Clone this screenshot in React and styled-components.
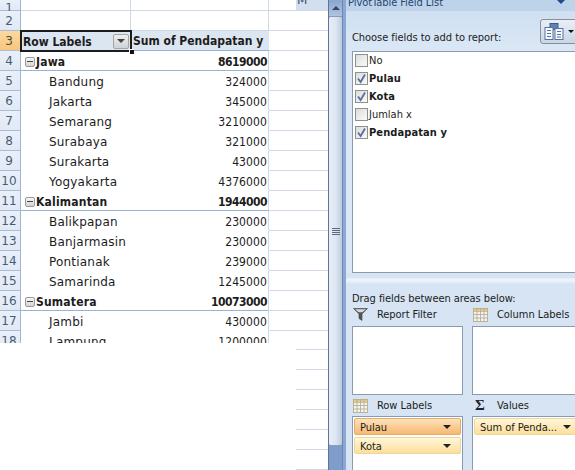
import React from "react";
import styled, { createGlobalStyle } from "styled-components";

const GlobalStyle = createGlobalStyle`
  html, body {
    margin: 0;
    padding: 0;
    background: #fff;
  }
  * {
    box-sizing: border-box;
  }
`;

const cellFont = `"DejaVu Sans", Verdana, sans-serif`;
const paneFont = `"DejaVu Sans Condensed", "DejaVu Sans", sans-serif`;

const Page = styled.div`
  display: flex;
  width: 575px;
  height: 470px;
  overflow: hidden;
  font-family: ${cellFont};
`;

/* worksheet */
const Sheet = styled.div`
  width: 328px;
  flex: none;
  display: flex;
  flex-direction: column;
  background: #fff;
`;

const Table = styled.div`
  height: 343px;
  flex: none;
  overflow: hidden;
`;

const Row = styled.div`
  display: grid;
  grid-template-columns: 21px 110px 138px 59px;
  height: ${(props) => (props.$clipped ? 11 : 20)}px;
  align-items: stretch;
  overflow: ${(props) => (props.$clipped ? "hidden" : "visible")};
`;

const RowHead = styled.div`
  display: flex;
  align-items: ${(props) => (props.$clipped ? "flex-end" : "center")};
  justify-content: center;
  padding: ${(props) => (props.$clipped ? "0 2px 0 0" : "2px 2px 0 0")};
  font-size: 12px;
  color: ${(props) => (props.$active ? "#4c4c3a" : "#4a5c74")};
  background: ${(props) =>
    props.$active
      ? "linear-gradient(#fbd9a2, #f8c67c)"
      : "linear-gradient(#eaf0f9, #e0e9f5)"};
  border-bottom: 1px solid #a9bdd6;
  border-right: 1px solid #9eb6ce;
  line-height: ${(props) => (props.$clipped ? "4px" : "17px")};
`;

const Cell = styled.div`
  display: flex;
  align-items: center;
  min-width: 0;
  padding-top: 2px;
  color: #1c1c1c;
  white-space: nowrap;
  font-family: ${(props) => (props.$bold ? paneFont : cellFont)};
  font-weight: ${(props) => (props.$bold ? 700 : 400)};
  font-size: 12px;
  border-bottom: 1px solid ${(props) => props.$line || "transparent"};
`;

const LabelCell = styled(Cell)`
  padding-left: ${(props) => props.$indent}px;
  letter-spacing: 0.2px;
`;

const ValueCell = styled(Cell)`
  justify-content: flex-end;
  padding-right: 1px;
  border-right: 1px solid #d0d7e5;
  font-family: ${paneFont};
  letter-spacing: ${(props) => (props.$bold ? "-0.5px" : "0.1px")};
`;

const BlankCell = styled.div`
  border-bottom: 1px solid #d0d7e5;
  border-right: ${(props) => (props.$divider ? "1px solid #d0d7e5" : "0")};
`;

const TailCell = styled(BlankCell)`
  display: flex;
  justify-content: flex-end;
`;

const ColumnStub = styled.div`
  width: 32px;
  height: 100%;
  padding-left: 1px;
  background: #d3dfee;
  font-size: 12px;
  line-height: 1px;
  color: #44546a;
  overflow: hidden;
`;

const ActiveCell = styled.div`
  position: relative;
  z-index: 2;
  display: flex;
  align-items: center;
  justify-content: space-between;
  padding: 1px 2px 0 2px;
  background: #dce6f1;
  font-family: ${paneFont};
  font-size: 12px;
  font-weight: 700;
  color: #1c1c1c;
  box-shadow: 0 0 0 1px #1c1c1c, inset 0 0 0 1px #1c1c1c;
`;

const FillHandle = styled.span`
  position: absolute;
  right: -3px;
  bottom: -3px;
  width: 5px;
  height: 5px;
  background: #111;
  border: 1px solid #fff;
  border-right: 0;
  border-bottom: 0;
`;

const FilterButton = styled.span`
  width: 16px;
  height: 15px;
  margin-top: -1px;
  display: flex;
  align-items: center;
  justify-content: center;
  border: 1px solid #a5a5a5;
  border-radius: 2px;
  background: linear-gradient(#eeeeee, #cfd2d6);
`;

const HeaderCell = styled.div`
  display: flex;
  align-items: center;
  padding: 1px 0 0 2px;
  font-family: ${paneFont};
  font-size: 12px;
  font-weight: 700;
  color: #1c1c1c;
  white-space: nowrap;
  background: #dce6f1;
  border-bottom: 1px solid #95b3d7;
`;

const DownArrow = styled.i`
  display: block;
  flex: none;
  width: 0;
  height: 0;
  border-left: ${(props) => props.$size}px solid transparent;
  border-right: ${(props) => props.$size}px solid transparent;
  border-top: ${(props) => props.$size}px solid ${(props) => props.$color};
`;

const Outline = styled.span`
  width: 10px;
  height: 10px;
  margin-right: 1px;
  flex: none;
  display: flex;
  align-items: center;
  justify-content: center;
  border: 1px solid #9a9a9a;
  border-radius: 2px;
  background: linear-gradient(#f7f7f7, #d4d4d4);

  &::after {
    content: "";
    width: 6px;
    height: 1px;
    background: #444;
  }
`;

const Below = styled.div`
  flex: 1;
  display: flex;
`;

const WhiteArea = styled.div`
  width: 296px;
  background: #fff;
`;

const LooseLines = styled.div`
  flex: 1;
  background: repeating-linear-gradient(
    #fff 0,
    #fff 6px,
    #d0d7e5 6px,
    #d0d7e5 7px,
    #fff 7px,
    #fff 20px
  );
`;

/* vertical scrollbar */
const ScrollBar = styled.div`
  width: 15px;
  flex: none;
  display: flex;
  flex-direction: column;
  background: #7e9dcb;
  border-left: 1px solid #5e7696;
  border-right: 1px solid #6f87ad;
`;

const ScrollUp = styled.div`
  height: 16px;
  flex: none;
  display: flex;
  align-items: center;
  justify-content: center;
  background: linear-gradient(#8aa6cf, #aec4e0);
`;

const UpArrow = styled.i`
  display: block;
  width: 0;
  height: 0;
  border-left: 4px solid transparent;
  border-right: 4px solid transparent;
  border-bottom: 4px solid #33455f;
`;

const ScrollThumb = styled.div`
  height: 430px;
  flex: none;
  display: flex;
  align-items: center;
  justify-content: center;
  background: linear-gradient(90deg, #e8eef7, #dbe5f2 55%, #bccbdd);
  border: 1px solid #8a9db8;
  border-left: 0;
  border-right: 0;
  border-radius: 2px;
`;

const Grip = styled.span`
  width: 8px;
  height: 7px;
  background: repeating-linear-gradient(#5c6b80 0, #5c6b80 1px, transparent 1px, transparent 2px);
`;

/* pivot table pane */
const Pane = styled.div`
  flex: 1;
  min-width: 0;
  display: flex;
  flex-direction: column;
  background: #d6e4f3;
  border-left: 3px solid #8ba7d3;
  font-family: ${paneFont};
  font-size: 11px;
  letter-spacing: -0.05px;
  color: #1c1c1c;
`;

const PaneTitle = styled.div`
  height: 11px;
  flex: none;
  display: flex;
  justify-content: space-between;
  padding: 0 9px 0 2px;
  background: #bdd3ea;
  color: #27456f;
  line-height: 6px;
  overflow: hidden;
`;

const TitleChevron = styled.i`
  display: block;
  width: 0;
  height: 0;
  margin-top: -1px;
  border-left: 5px solid transparent;
  border-right: 5px solid transparent;
  border-top: 5px solid #1f4a8c;
`;

const PaneBody = styled.div`
  padding-left: 6px;
  background: linear-gradient(#cfe0f2, #dbe7f5 40px);
`;

const ToolRow = styled.div`
  height: 40px;
  display: flex;
  align-items: flex-end;
  justify-content: space-between;
  padding-bottom: 7px;
  position: relative;
`;

const LayoutButton = styled.span`
  position: absolute;
  right: -9px;
  top: 8px;
  width: 44px;
  height: 25px;
  display: flex;
  align-items: center;
  gap: 4px;
  padding-left: 3px;
  border: 1px solid #8b8f96;
  border-radius: 3px;
  background: linear-gradient(#e9eff7, #c9d6e6);
`;

const FieldBox = styled.div`
  height: 222px;
  width: 240px;
  display: flex;
  flex-direction: column;
  padding: 0 0 0 2px;
  background: #fff;
  border: 1px solid #8a9bb0;
  border-right: 0;

  & > label:first-child {
    margin-top: -1px;
  }
`;

const FieldRow = styled.label`
  height: 18px;
  flex: none;
  display: flex;
  align-items: center;
  gap: 1px;
  font-weight: ${(props) => (props.$on ? 700 : 400)};
  letter-spacing: ${(props) => (props.$on ? "0.1px" : "0")};
`;

const Check = styled.span`
  width: 13px;
  height: 13px;
  flex: none;
  display: flex;
  align-items: center;
  justify-content: center;
  border: 1px solid #8e8f8f;
  background: linear-gradient(135deg, #dcdcdc, #fbfbfb);
`;

const Splitter = styled.div`
  height: 6px;
  margin-top: 5px;
  background: linear-gradient(#e4eef9, #eef4fb 40%, #d8e5f4);
`;

const DropZone = styled.div`
  flex: 1;
  padding: 7px 0 0 6px;
  overflow: hidden;
  background: #d6e4f3;
`;

const DragHint = styled.div`
  height: 15px;
  line-height: 15px;
`;

const AreaGrid = styled.div`
  display: grid;
  grid-template-columns: 111px 111px;
  grid-template-rows: 90px 1fr;
  column-gap: 9px;
`;

const Area = styled.div`
  display: flex;
  flex-direction: column;
`;

const AreaHead = styled.div`
  height: 20px;
  flex: none;
  display: flex;
  align-items: center;
  padding: 0 0 ${(props) => (props.$low ? 1 : 3)}px 1px;
  font-size: 11px;
`;

const AreaIcon = styled.span`
  width: 24px;
  flex: none;
  display: flex;
  align-items: center;
`;

const Sigma = styled.span`
  font-family: "Liberation Serif", serif;
  font-weight: 700;
  font-size: 15px;
  line-height: 15px;
  margin-left: 2px;
  color: #1d2430;
`;

const AreaBox = styled.div`
  height: ${(props) => (props.$open ? 90 : 69)}px;
  display: flex;
  flex-direction: column;
  gap: 2px;
  padding: 1px;
  background: #fff;
  border: 1px solid #8a9bb0;
`;

const Chip = styled.div`
  height: 17px;
  flex: none;
  display: flex;
  align-items: center;
  justify-content: space-between;
  padding: 1px 9px 0 5px;
  border: 1px solid ${(props) => (props.$hot ? "#e3ad6c" : "#ecd79f")};
  border-radius: 2px;
  background: ${(props) =>
    props.$hot
      ? "linear-gradient(#fde2bb, #f8b871)"
      : "linear-gradient(#fff6d9, #fddf9b)"};
  white-space: nowrap;
`;

const FunnelIcon = () => (
  <svg width="15" height="13" viewBox="0 0 15 13">
    <path d="M0.5 0.5H14.5L9 6V12.5L6 10.5V6Z" fill="#555" stroke="#444" strokeWidth="0.6" />
    <path d="M2 1.2H13L9.4 4.2H5.6Z" fill="#d9d9d9" />
  </svg>
);

const GridIcon = () => (
  <svg width="15" height="14" viewBox="0 0 15 14">
    <rect x="0.5" y="0.5" width="14" height="13" fill="#fbf3da" stroke="#b9b39a" />
    <rect x="0.5" y="0.5" width="14" height="3" fill="#e5c98e" stroke="#b9a06e" strokeWidth="0.5" />
    <path d="M4 0.5V13.5M7.5 0.5V13.5M11 0.5V13.5M0.5 6.5H14.5M0.5 10H14.5" stroke="#a4a7b4" strokeWidth="0.8" />
  </svg>
);

const LayoutIcon = () => (
  <svg width="20" height="18" viewBox="0 0 20 18">
    <rect x="6" y="0.5" width="8" height="6" fill="#5f83b6" stroke="#3d5f90" />
    <rect x="1" y="4.5" width="8" height="12" fill="#f6f8fb" stroke="#54739f" />
    <path d="M3 7.5H7M3 10.5H7M3 13.5H7" stroke="#54739f" />
    <rect x="11" y="5.5" width="8" height="11" fill="#f6f8fb" stroke="#54739f" />
    <path d="M13 8.5H17M13 11.5H17M13 14H17" stroke="#54739f" />
  </svg>
);

const CheckMark = () => (
  <svg width="11" height="11" viewBox="0 0 11 11">
    <path d="M2 5.5L4.6 9L9 1.5" fill="none" stroke="#5a6f9c" strokeWidth="1.8" />
  </svg>
);

const groups = [
  {
    name: "Jawa",
    total: "8619000",
    items: [
      ["Bandung", "324000"],
      ["Jakarta", "345000"],
      ["Semarang", "3210000"],
      ["Surabaya", "321000"],
      ["Surakarta", "43000"],
      ["Yogyakarta", "4376000"],
    ],
  },
  {
    name: "Kalimantan",
    total: "1944000",
    items: [
      ["Balikpapan", "230000"],
      ["Banjarmasin", "230000"],
      ["Pontianak", "239000"],
      ["Samarinda", "1245000"],
    ],
  },
  {
    name: "Sumatera",
    total: "10073000",
    items: [
      ["Jambi", "430000"],
      ["Lampung", "1200000"],
    ],
  },
];

const fields = [
  ["No", false],
  ["Pulau", true],
  ["Kota", true],
  ["Jumlah x", false],
  ["Pendapatan y", true],
];

const pivotRows = [];
groups.forEach((group) => {
  pivotRows.push({ label: group.name, value: group.total, bold: true });
  group.items.forEach(([label, value]) => pivotRows.push({ label, value }));
});

export default function App() {
  return (
    <Page>
      <GlobalStyle />
      <Sheet>
        <Table>
          <Row $clipped>
            <RowHead $clipped>1</RowHead>
            <BlankCell $divider />
            <BlankCell $divider />
            <TailCell>
              <ColumnStub>M</ColumnStub>
            </TailCell>
          </Row>
          <Row>
            <RowHead>2</RowHead>
            <BlankCell $divider />
            <BlankCell $divider />
            <BlankCell />
          </Row>
          <Row>
            <RowHead $active>3</RowHead>
            <ActiveCell>
              Row Labels
              <FilterButton>
                <DownArrow $size={4} $color="#444" />
              </FilterButton>
              <FillHandle />
            </ActiveCell>
            <HeaderCell>Sum of Pendapatan y</HeaderCell>
            <BlankCell />
          </Row>
          {pivotRows.map((row, i) => (
            <Row key={row.label}>
              <RowHead>{i + 4}</RowHead>
              <LabelCell
                $bold={row.bold}
                $indent={row.bold ? 4 : 28}
                $line={row.bold ? "#95b3d7" : undefined}
              >
                {row.bold && <Outline />}
                {row.label}
              </LabelCell>
              <ValueCell $bold={row.bold} $line={row.bold ? "#95b3d7" : undefined}>
                {row.value}
              </ValueCell>
              <BlankCell />
            </Row>
          ))}
        </Table>
        <Below>
          <WhiteArea />
          <LooseLines />
        </Below>
      </Sheet>

      <ScrollBar>
        <ScrollUp>
          <UpArrow />
        </ScrollUp>
        <ScrollThumb>
          <Grip />
        </ScrollThumb>
      </ScrollBar>

      <Pane>
        <PaneTitle>
          PivotTable Field List
          <TitleChevron />
        </PaneTitle>
        <PaneBody>
          <ToolRow>
            Choose fields to add to report:
            <LayoutButton>
              <LayoutIcon />
              <DownArrow $size={3} $color="#111" />
            </LayoutButton>
          </ToolRow>
          <FieldBox>
            {fields.map(([name, on]) => (
              <FieldRow key={name} $on={on}>
                <Check>{on && <CheckMark />}</Check>
                {name}
              </FieldRow>
            ))}
          </FieldBox>
        </PaneBody>
        <Splitter />
        <DropZone>
          <DragHint>Drag fields between areas below:</DragHint>
          <AreaGrid>
            <Area>
              <AreaHead>
                <AreaIcon>
                  <FunnelIcon />
                </AreaIcon>
                Report Filter
              </AreaHead>
              <AreaBox />
            </Area>
            <Area>
              <AreaHead>
                <AreaIcon>
                  <GridIcon />
                </AreaIcon>
                Column Labels
              </AreaHead>
              <AreaBox />
            </Area>
            <Area>
              <AreaHead $low>
                <AreaIcon>
                  <GridIcon />
                </AreaIcon>
                Row Labels
              </AreaHead>
              <AreaBox $open>
                <Chip $hot>
                  Pulau
                  <DownArrow $size={4} $color="#222" />
                </Chip>
                <Chip>
                  Kota
                  <DownArrow $size={4} $color="#222" />
                </Chip>
              </AreaBox>
            </Area>
            <Area>
              <AreaHead $low>
                <AreaIcon>
                  <Sigma>Σ</Sigma>
                </AreaIcon>
                Values
              </AreaHead>
              <AreaBox $open>
                <Chip>
                  Sum of Penda...
                  <DownArrow $size={4} $color="#222" />
                </Chip>
              </AreaBox>
            </Area>
          </AreaGrid>
        </DropZone>
      </Pane>
    </Page>
  );
}
